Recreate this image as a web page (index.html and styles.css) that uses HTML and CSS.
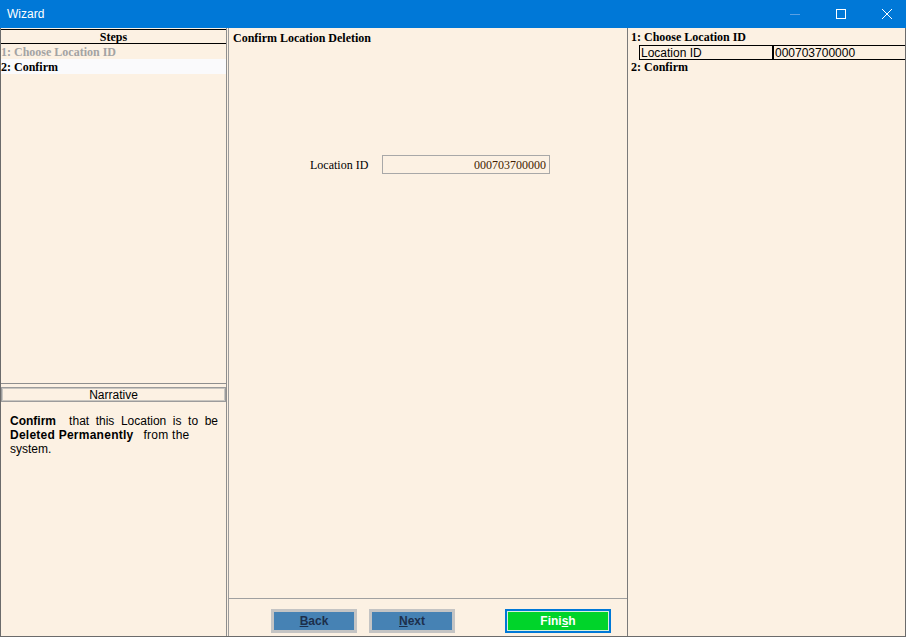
FILE: index.html
```html
<!DOCTYPE html>
<html lang="en">
<head>
  <meta charset="UTF-8">
  <title>Wizard</title>
  <link rel="stylesheet" href="styles.css">
</head>
<body>
  <div class="window">
    <div class="titlebar">
      <span class="title">Wizard</span>
      <span class="win-ctrl">
        <svg width="10" height="10" viewBox="0 0 10 10"><line x1="0" y1="5.5" x2="10" y2="5.5" stroke="#5aa0e3" stroke-width="1"/></svg>
      </span>
      <span class="win-ctrl">
        <svg width="10" height="10" viewBox="0 0 10 10"><rect x="0.5" y="0.5" width="9" height="9" fill="none" stroke="#fff" stroke-width="1"/></svg>
      </span>
      <span class="win-ctrl close">
        <svg width="10" height="10" viewBox="0 0 10 10"><path d="M0 0L10 10M10 0L0 10" stroke="#fff" stroke-width="1"/></svg>
      </span>
    </div>

    <div class="main">
      <div class="left">
        <div class="steps">
          <div class="steps-head">Steps</div>
          <div class="step done">1: Choose Location ID</div>
          <div class="step current">2: Confirm</div>
        </div>
        <div class="narrative">
          <div class="narr-head">Narrative</div>
          <div class="narr-text">
            <span class="line justify"><b>Confirm</b>&nbsp; that this Location is to be</span>
            <span class="line"><b class="wide">Deleted Permanently</b>&nbsp;&nbsp; <span class="wide">from the</span></span>
            <span class="line">system.</span>
          </div>
        </div>
      </div>

      <div class="middle">
        <div class="page-title">Confirm Location Deletion</div>
        <div class="page-content">
          <div class="field">
            <label class="field-label">Location ID</label>
            <div class="field-box">000703700000</div>
          </div>
        </div>
        <div class="buttons">
          <button class="btn"><u>B</u>ack</button>
          <button class="btn next"><u>N</u>ext</button>
          <button class="btn finish">Fini<u>s</u>h</button>
        </div>
      </div>

      <div class="right">
        <div class="sum-title">1: Choose Location ID</div>
        <div class="sum-row">
          <div class="sum-key">Location ID</div>
          <div class="sum-val">000703700000</div>
        </div>
        <div class="sum-title">2: Confirm</div>
      </div>
    </div>
  </div>
</body>
</html>
```

FILE: styles.css
```css
body {
  margin: 0;
  background: #fff;
  font-family: "Liberation Serif", serif;
  font-size: 12px;
  color: #000;
}
.window {
  width: 906px;
  height: 637px;
  display: flex;
  flex-direction: column;
  background: #fcf1e3;
  overflow: hidden;
}
.titlebar {
  height: 28px;
  flex: none;
  display: flex;
  align-items: center;
  background: #0078d7;
  color: #fff;
  font-family: "Liberation Sans", sans-serif;
  font-size: 12px;
  padding-left: 7px;
}
.title {
  flex: 1;
}
.win-ctrl {
  width: 46px;
  height: 28px;
  display: flex;
  align-items: center;
  justify-content: center;
}
.win-ctrl.close {
  margin-right: -4px;
}
.main {
  flex: 1;
  display: flex;
  border: 1px solid #6b6b6b;
  border-top: none;
  min-height: 0;
}
.left {
  width: 226px;
  box-sizing: border-box;
  border-right: 1px solid #8e8e8e;
  display: flex;
  flex-direction: column;
}
.steps {
  height: 356px;
  box-sizing: border-box;
  padding-top: 1px;
  border-bottom: 1px solid #8e8e8e;
}
.steps-head {
  height: 15px;
  box-sizing: border-box;
  border-top: 1px solid #000;
  border-bottom: 1px solid #000;
  line-height: 15px;
  overflow: hidden;
  text-align: center;
  font-weight: bold;
}
.step {
  height: 15px;
  line-height: 17px;
  overflow: hidden;
  font-weight: bold;
}
.step.done {
  color: #a3a3a3;
}
.step.current {
  background: #fafafc;
}
.narrative {
  flex: 1;
}
.narr-head {
  margin-top: 3px;
  height: 15px;
  box-sizing: border-box;
  border: 1px solid #9c9c9c;
  box-shadow: inset 0 0 0 1px #c9c6c0;
  line-height: 14px;
  text-align: center;
  font-family: "Liberation Sans", sans-serif;
  font-size: 12px;
}
.narr-text {
  margin-top: 12px;
  padding: 0 8px 0 9px;
  font-family: "Liberation Sans", sans-serif;
  font-size: 12px;
  line-height: 14px;
}
.line {
  display: block;
}
.line.justify {
  text-align: justify;
  text-align-last: justify;
}
.wide {
  letter-spacing: 0.25px;
}
.middle {
  width: 400px;
  box-sizing: border-box;
  margin-left: 1px;
  border-left: 1px solid #9c9c9c;
  border-right: 1px solid #7a7a7a;
  display: flex;
  flex-direction: column;
}
.page-title {
  padding: 3px 0 0 4px;
  line-height: 14px;
  font-weight: bold;
}
.page-content {
  flex: 1;
}
.field {
  display: flex;
  align-items: center;
  margin: 110px 0 0 81px;
}
.field-label {
  width: 72px;
  padding-top: 2px;
}
.field-box {
  width: 168px;
  height: 19px;
  box-sizing: border-box;
  border: 1px solid #a8a8a8;
  padding-right: 3px;
  line-height: 19px;
  text-align: right;
  color: #3f1e00;
}
.buttons {
  height: 38px;
  box-sizing: border-box;
  border-top: 1px solid #a0a0a0;
  padding: 10px 0 0 42px;
  display: flex;
  align-items: flex-start;
}
.btn {
  width: 86px;
  height: 24px;
  box-sizing: border-box;
  margin: 0 12px 0 0;
  padding: 0;
  border: 3px solid #c4c4c4;
  background: #4682b4;
  color: #1c2f4c;
  font-family: "Liberation Sans", sans-serif;
  font-size: 12px;
  font-weight: bold;
}
.btn.next {
  margin-right: 50px;
}
.btn.finish {
  width: 106px;
  border: 2px solid #0078d7;
  box-shadow: inset 0 0 0 1px #d8f0dc;
  background: #00d42a;
  color: #fff;
}
.right {
  flex: 1;
  padding: 2px 0 0 3px;
}
.sum-title {
  line-height: 15px;
  font-weight: bold;
}
.sum-row {
  display: flex;
  height: 15px;
  box-sizing: border-box;
  margin-left: 8px;
  border: 1px solid #000;
  border-right: none;
  font-family: "Liberation Sans", sans-serif;
  font-size: 12px;
  line-height: 14px;
}
.sum-key {
  width: 134px;
  box-sizing: border-box;
  border-right: 2px solid #000;
  padding-left: 1px;
}
.sum-val {
  padding-left: 1px;
}
```
